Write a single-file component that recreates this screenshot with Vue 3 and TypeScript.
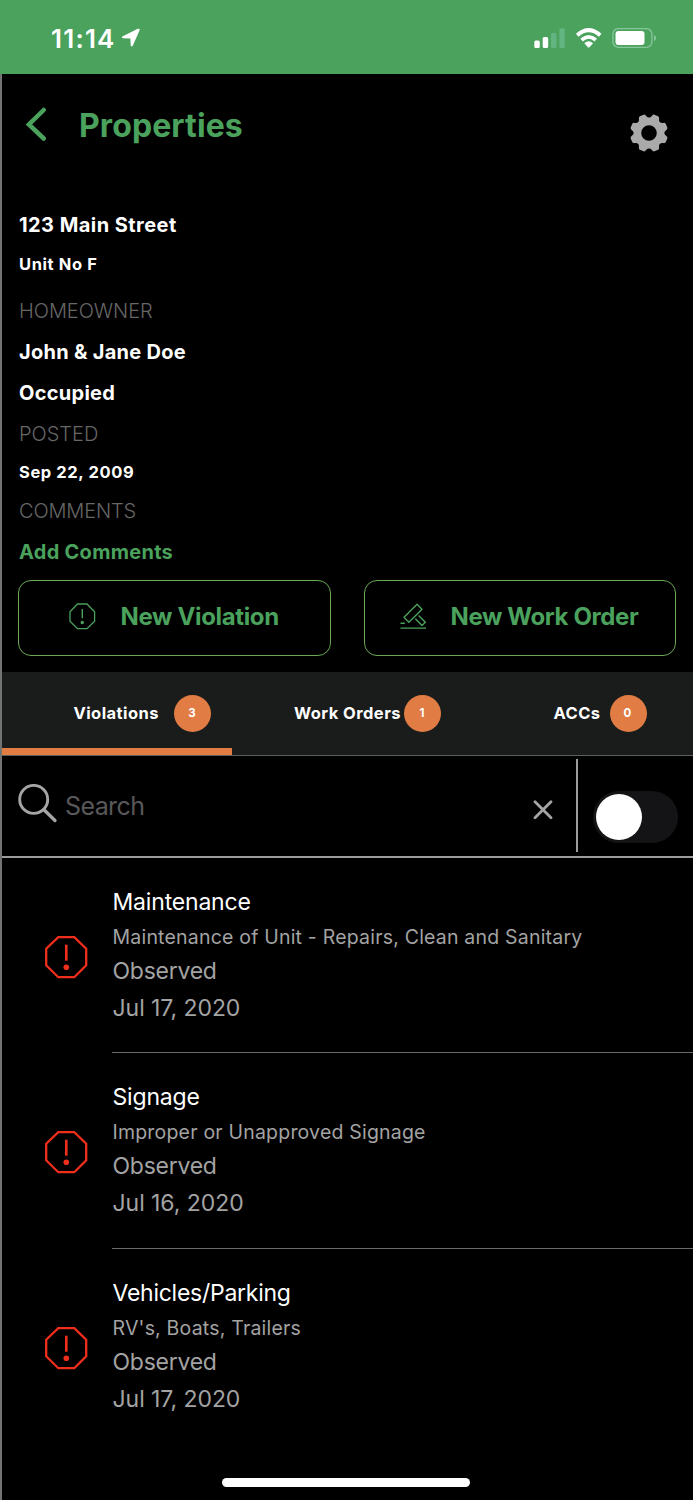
<script setup lang="ts">
import { ref } from 'vue'

interface Tab {
  key: string
  label: string
  count: number
}

interface Violation {
  title: string
  detail: string
  status: string
  date: string
}

const tabs: Tab[] = [
  { key: 'violations', label: 'Violations', count: 3 },
  { key: 'orders', label: 'Work Orders', count: 1 },
  { key: 'accs', label: 'ACCs', count: 0 },
]

const violations: Violation[] = [
  {
    title: 'Maintenance',
    detail: 'Maintenance of Unit - Repairs, Clean and Sanitary',
    status: 'Observed',
    date: 'Jul 17, 2020',
  },
  {
    title: 'Signage',
    detail: 'Improper or Unapproved Signage',
    status: 'Observed',
    date: 'Jul 16, 2020',
  },
  {
    title: 'Vehicles/Parking',
    detail: "RV's, Boats, Trailers",
    status: 'Observed',
    date: 'Jul 17, 2020',
  },
]

const activeTab = ref('violations')
const query = ref('')
const enabled = ref(false)
</script>

<template>
  <div class="phone">
    <header class="status">
      <span class="time">11:14</span>
      <svg class="location" width="20" height="20" viewBox="0 0 20 20">
        <path d="M18.600 2.200 11.900 17.600Q10.700 19.600 9.700 17.600L9.400 10.600 2 10.300Q-.2 9.300 1.800 8.200L16.800.8Q19.200.1 18.600 2.200Z" fill="#fff" />
      </svg>
      <svg class="signal" width="31" height="21" viewBox="0 0 31 21">
        <rect x="0.300" y="12.500" width="5.500" height="7.500" rx="1.500" fill="#fff" />
        <rect x="8.700" y="9" width="5.500" height="11" rx="1.500" fill="#fff" />
        <rect x="17" y="5" width="5.500" height="15" rx="1.500" fill="#62b480" />
        <rect x="25.300" y="0.300" width="5.500" height="19.700" rx="1.500" fill="#62b480" />
      </svg>
      <svg class="wifi" width="28" height="21" viewBox="0 0 28 21">
        <path d="M2.200 7.200Q13.700-2.800 25.200 7.200" fill="none" stroke="#fff" stroke-width="4" />
        <path d="M6.600 12Q13.700 5.800 20.800 12" fill="none" stroke="#fff" stroke-width="3.700" />
        <path d="M9.300 15.300Q13.700 11.300 18.100 15.300L14.400 19.300Q13.700 20 13 19.300Z" fill="#fff" />
      </svg>
      <svg class="battery" width="45" height="21" viewBox="0 0 45 21">
        <rect x="0.900" y="0.600" width="39" height="18.800" rx="5.500" fill="none" stroke="#86c79b" stroke-width="1.300" />
        <rect x="3.500" y="3" width="29" height="14" rx="3" fill="#fff" />
        <path d="M42 6.700Q44.200 7.900 44.200 10T42 13.300Z" fill="#86c79b" />
      </svg>
    </header>

    <main class="screen">
      <nav class="nav">
        <svg class="back" width="24" height="36" viewBox="0 0 24 36">
          <path d="M19.700 3 4.900 17.500 19.700 31.500" fill="none" stroke="#4aa25d" stroke-width="4.500" stroke-linecap="round" stroke-linejoin="miter" />
        </svg>
        <h1>Properties</h1>
        <svg class="gear" width="38" height="38" viewBox="-19 -19 38 38">
          <g fill="#aaa">
            <path
              v-for="n in 8"
              :key="n"
              :transform="`rotate(${n * 45 - 22.5})`"
              d="M-5.800-13.500Q-4.500-15-3.800-17.200-3.400-18.900-2-19L2-19Q3.400-18.900 3.800-17.200 4.500-15 5.800-13.500Z"
            />
          </g>
          <circle r="11.600" fill="none" stroke="#aaa" stroke-width="7.600" />
        </svg>
      </nav>

      <section class="details">
        <p class="strong address">123 Main Street</p>
        <p class="strong small unit">Unit No F</p>
        <p class="caption owner">HOMEOWNER</p>
        <p class="strong name">John &amp; Jane Doe</p>
        <p class="strong name">Occupied</p>
        <p class="caption posted">POSTED</p>
        <p class="strong small date">Sep 22, 2009</p>
        <p class="caption comments">COMMENTS</p>
        <p class="strong name link">Add Comments</p>
      </section>

      <section class="actions">
        <button class="action violation" type="button">
          <svg width="27" height="27" viewBox="0 0 27 27" fill="none" stroke="#4aa25d" stroke-width="1.300">
            <path d="M8.500 1H18L25.600 8.700V18.300L18 25.600H8.500L1 18.300V8.700Z" />
            <path d="M13.300 6V15.300" stroke-width="1.400" />
            <circle cx="13.300" cy="19.500" r="1.700" fill="#4aa25d" stroke="none" />
          </svg>
          <span>New Violation</span>
        </button>
        <button class="action order" type="button">
          <svg width="27" height="27" viewBox="0 0 27 27" fill="none" stroke="#4aa25d" stroke-width="1.400" stroke-linejoin="round">
            <path d="M17 1.200 22 6.200 8.900 19.200 4 14.200Z" />
            <path d="M15.300 15.700 22 22.500 25.300 19.200 18.600 12.400" />
            <path d="M.5 20.300H4.800M.5 25.100H26" />
          </svg>
          <span>New Work Order</span>
        </button>
      </section>

      <section class="tabs">
        <button
          v-for="tab in tabs"
          :key="tab.key"
          type="button"
          class="tab"
          :class="[tab.key, { active: activeTab === tab.key }]"
          @click="activeTab = tab.key"
        >
          <span class="label">{{ tab.label }}</span>
          <span class="badge">{{ tab.count }}</span>
        </button>
      </section>

      <section class="search">
        <svg class="lens" width="40" height="40" viewBox="0 0 40 40" fill="none" stroke="#a5a5a5">
          <circle cx="15.700" cy="15.400" r="14" stroke-width="2.900" />
          <path d="M26 25.700 37 36.500" stroke-width="3.300" stroke-linecap="round" />
        </svg>
        <input v-model="query" type="text" placeholder="Search" />
        <svg class="clear" width="20" height="20" viewBox="0 0 20 20" @click="query = ''">
          <path d="M2 1.700 18 17.700M18 1.700 2 17.700" stroke="#a5a5a5" stroke-width="2.800" stroke-linecap="round" />
        </svg>
        <div class="divider"></div>
        <div class="switch" :class="{ on: enabled }" @click="enabled = !enabled">
          <div class="knob"></div>
        </div>
      </section>

      <ul class="list">
        <li v-for="(item, i) in violations" :key="i" class="item">
          <svg class="alert" width="44" height="44" viewBox="0 0 44 44" fill="none" stroke="#ef2e1c">
            <path d="M14.300 2.200H30.300L42.200 13.700V30.300L30.300 42.200H14.300L2.200 30.300V13.700Z" stroke-width="2.300" />
            <path d="M22.300 9.700V25.700" stroke-width="2.600" />
            <circle cx="22.300" cy="32.200" r="2.800" fill="#ef2e1c" stroke="none" />
          </svg>
          <div class="info">
            <p class="title" :class="{ tight: item.title.length > 12 }">{{ item.title }}</p>
            <p class="detail">{{ item.detail }}</p>
            <p class="state">{{ item.status }}</p>
            <p class="when">{{ item.date }}</p>
          </div>
        </li>
      </ul>

      <div class="home"></div>
    </main>
  </div>
</template>

<style>
body {
  margin: 0;
  background: #000;
}
</style>

<style scoped>
.phone {
  box-sizing: border-box;
  width: 693px;
  height: 1500px;
  overflow: hidden;
  background: #000;
  color: #fff;
  font-family: Inter, 'Liberation Sans', sans-serif;
}

p,
h1,
ul {
  margin: 0;
  padding: 0;
}

button {
  border: 0;
  padding: 0;
  background: none;
  color: inherit;
  font: inherit;
}

svg {
  display: block;
  flex: none;
}

.status {
  display: flex;
  box-sizing: border-box;
  height: 74px;
  padding-top: 28px;
  background: #4aa25d;
}

.time {
  box-sizing: border-box;
  width: 121px;
  padding-left: 51px;
  font-size: 26px;
  font-weight: 600;
  line-height: 21px;
  letter-spacing: 1.2px;
}

.signal {
  margin-left: 393px;
}

.wifi {
  margin-left: 10px;
}

.battery {
  margin-left: 9px;
}

.screen {
  display: flex;
  flex-direction: column;
  box-sizing: border-box;
  height: 1426px;
  border-left: 2px solid #737373;
}

.nav {
  display: flex;
  height: 131px;
}

.back {
  margin: 33px 0 0 22px;
}

h1 {
  flex: 1;
  margin-left: 31px;
  color: #4aa25d;
  font-size: 32px;
  font-weight: 680;
  line-height: 103px;
  letter-spacing: 0.1px;
}

.gear {
  margin: 39.5px 25.5px 0 0;
}

.details {
  height: 375px;
  padding-left: 17px;
}

.strong {
  font-size: 20px;
  font-weight: 650;
}

.address {
  line-height: 41px;
  letter-spacing: 0.45px;
}

.small {
  font-size: 16.5px;
  letter-spacing: 0.6px;
}

.unit {
  line-height: 37px;
}

.caption {
  color: #676767;
  font-size: 20px;
  font-weight: 300;
}

.owner {
  margin-top: 8px;
  line-height: 41px;
  letter-spacing: -0.05px;
}

.name {
  line-height: 41px;
  letter-spacing: 0.28px;
}

.posted {
  line-height: 40px;
  letter-spacing: 0;
}

.date {
  line-height: 37px;
}

.comments {
  line-height: 41px;
  letter-spacing: -0.15px;
}

.link {
  color: #4aa25d;
}

.actions {
  display: grid;
  grid-template-columns: 313px 312px;
  gap: 33px;
  height: 92px;
  padding-left: 16px;
}

.action {
  display: flex;
  align-items: center;
  box-sizing: border-box;
  height: 75.500px;
  border: 1px solid #6aa857;
  border-radius: 13px;
  padding-bottom: 2px;
  color: #4aa25d;
  font-size: 24px;
  font-weight: 650;
}

.action span {
  padding-bottom: 1px;
}

.action svg {
  margin-right: 24.5px;
}

.violation {
  padding-left: 50px;
  letter-spacing: -0.35px;
}

.order {
  padding-left: 35px;
  letter-spacing: -0.4px;
}

.order svg {
  margin-right: 23.5px;
}

.tabs {
  display: grid;
  grid-template-columns: 230px 230px 231px;
  box-sizing: border-box;
  height: 84px;
  border-bottom: 1px solid #5d5f5f;
  background: #1a1c1b;
}

.tab {
  display: flex;
  align-items: center;
  justify-content: flex-end;
  box-sizing: border-box;
  border-bottom: 7px solid transparent;
  padding-top: 7px;
  font-size: 16.5px;
  font-weight: 650;
  letter-spacing: 0.45px;
}

.tab.active {
  border-bottom-color: #e07c44;
}

.label {
  padding-bottom: 1px;
}

.violations {
  gap: 15px;
  padding-right: 21px;
}

.orders {
  gap: 3px;
  padding-right: 21px;
}

.accs {
  gap: 9px;
  padding-right: 46.5px;
}

.badge {
  width: 37px;
  height: 37px;
  border-radius: 50%;
  background: #e07c44;
  font-size: 11.5px;
  font-weight: 700;
  line-height: 36px;
  letter-spacing: 0;
  text-align: center;
  text-indent: -1px;
}

.search {
  display: flex;
  box-sizing: border-box;
  height: 102px;
  border-bottom: 2px solid #9b9d9c;
}

.lens {
  margin: 28px 0 0 16px;
}

input {
  flex: 1;
  min-width: 0;
  height: 40px;
  margin: 30px 0 0 7px;
  border: 0;
  padding: 0;
  outline: 0;
  background: none;
  color: #fff;
  font: 400 25px/40px Inter, sans-serif;
  letter-spacing: -0.6px;
}

input::placeholder {
  color: #58585a;
  opacity: 1;
}

.clear {
  margin: 44px 23px 0 0;
}

.divider {
  width: 2px;
  height: 93px;
  margin-top: 3px;
  background: #9b9d9c;
}

.switch {
  box-sizing: border-box;
  width: 85px;
  height: 52px;
  margin: 35px 15px 0 15px;
  border-radius: 26px;
  padding: 3px;
  background: #141416;
}

.knob {
  width: 46px;
  height: 46px;
  border-radius: 50%;
  background: #fff;
}

.switch.on .knob {
  margin-left: auto;
}

.list {
  flex: 1;
  list-style: none;
}

.item {
  display: flex;
  height: 195.3px;
}

.alert {
  margin: 77px 24px 0 42px;
}

.info {
  flex: 1;
  box-sizing: border-box;
  padding: 26.2px 0 0 0.5px;
  border-bottom: 1px solid #6b6b6b;
  color: #a3a3a3;
  font-size: 23px;
}

.item:last-child .info {
  border-bottom: 0;
}

.title {
  color: #fff;
  line-height: 36px;
  letter-spacing: -0.18px;
}

.title.tight {
  letter-spacing: -0.26px;
}

.detail {
  font-size: 19.5px;
  line-height: 34px;
  letter-spacing: 0.2px;
}

.state {
  line-height: 34px;
  letter-spacing: -0.25px;
}

.when {
  line-height: 40px;
  letter-spacing: -0.05px;
}

.home {
  width: 248px;
  height: 9px;
  margin: 0 0 13px 220.3px;
  border-radius: 5px;
  background: #fff;
}
</style>
